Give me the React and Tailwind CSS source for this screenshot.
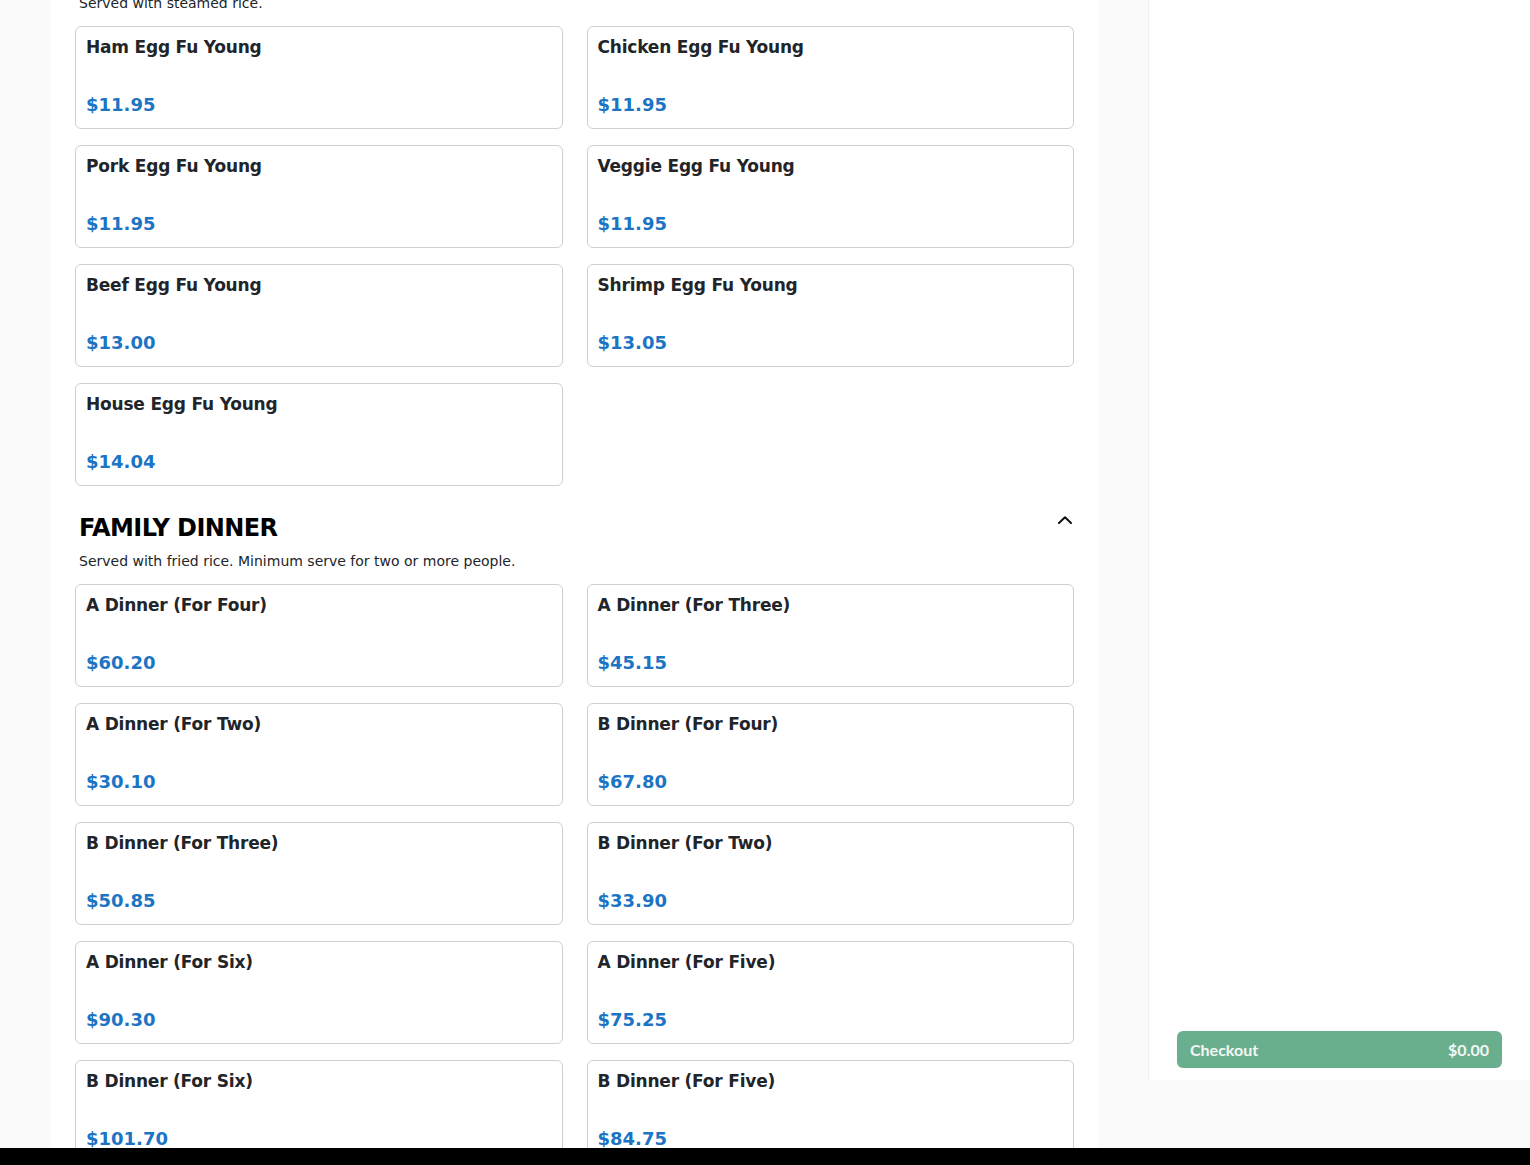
import React from "react";

const egg = [
  ["Ham Egg Fu Young", "$11.95"],
  ["Chicken Egg Fu Young", "$11.95"],
  ["Pork Egg Fu Young", "$11.95"],
  ["Veggie Egg Fu Young", "$11.95"],
  ["Beef Egg Fu Young", "$13.00"],
  ["Shrimp Egg Fu Young", "$13.05"],
  ["House Egg Fu Young", "$14.04"],
];

const family = [
  ["A Dinner (For Four)", "$60.20"],
  ["A Dinner (For Three)", "$45.15"],
  ["A Dinner (For Two)", "$30.10"],
  ["B Dinner (For Four)", "$67.80"],
  ["B Dinner (For Three)", "$50.85"],
  ["B Dinner (For Two)", "$33.90"],
  ["A Dinner (For Six)", "$90.30"],
  ["A Dinner (For Five)", "$75.25"],
  ["B Dinner (For Six)", "$101.70"],
  ["B Dinner (For Five)", "$84.75"],
];

function Card({ name, price }) {
  return (
    <div className="h-[103px] border border-[#cfcfcf] rounded-[6px] bg-white pt-[7px] pb-[10px] px-[10px] flex flex-col justify-between">
      <div className="text-[17px] leading-[27px] font-bold tracking-[-0.2px] text-[#212529]">{name}</div>
      <div className="text-[18px] leading-[27px] font-bold text-[#1c74c4]">{price}</div>
    </div>
  );
}

function Grid({ items }) {
  return (
    <div className="grid grid-cols-2 gap-x-6 gap-y-4">
      {items.map(([n, p]) => (
        <Card key={n} name={n} price={p} />
      ))}
    </div>
  );
}

export default function App() {
  return (
    <div
      className="h-[1165px] overflow-hidden bg-[#fafafa] flex flex-col"
      style={{ fontFamily: '"DejaVu Sans", sans-serif' }}
    >
      <div className="h-[1148px] flex flex-row items-start">
        <div className="ml-[51px] w-[1047px] h-[1148px] bg-white overflow-hidden">
          <div className="px-6 -mt-[7px]">
            <p className="px-1 text-[14px] leading-[20px] text-[#212529]">Served with steamed rice.</p>
            <div className="mt-[13px]">
              <Grid items={egg} />
            </div>
            <div className="mt-[26px] flex flex-row justify-between items-start">
              <h2 className="px-1 text-[24px] leading-[32px] font-bold tracking-[-0.6px] text-black">FAMILY DINNER</h2>
              <svg className="mt-[4px] mr-[2px]" width="14" height="8" viewBox="0 0 14 8" fill="none">
                <path d="M1 7 L7 1.2 L13 7" stroke="#111" strokeWidth="2" strokeLinecap="round" strokeLinejoin="round" />
              </svg>
            </div>
            <p className="mt-[7px] px-1 text-[14px] leading-[20px] text-[#212529]">
              Served with fried rice. Minimum serve for two or more people.
            </p>
            <div className="mt-[13px]">
              <Grid items={family} />
            </div>
          </div>
        </div>
        <div className="ml-[50px] flex-1 h-[1080px] bg-white border-l border-[#f0f0f0] flex flex-col justify-end px-[28px] pb-[12px]">
          <button
            className="h-[37px] w-full rounded-[6px] bg-[#6aaf8d] flex flex-row items-center justify-between px-[13px] text-[16px] font-bold text-[#f3f8f5]"
            style={{ fontFamily: 'Lato, "Noto Sans", sans-serif' }}
          >
            <span>Checkout</span>
            <span>$0.00</span>
          </button>
        </div>
      </div>
      <div className="h-[17px] bg-black" />
    </div>
  );
}
